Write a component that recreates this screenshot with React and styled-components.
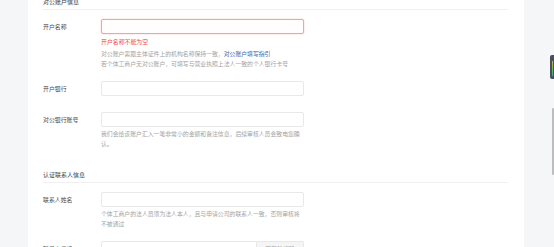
import React from 'react';
import styled, { createGlobalStyle } from 'styled-components';

const Global = createGlobalStyle`
  html, body { margin: 0; padding: 0; overflow: hidden; background: #f5f6f8; }
  body { font-family: "Noto Sans CJK SC", "Noto Sans", sans-serif; }
  #root { height: 247px; }
`;

const Page = styled.div`
  position: relative;
  display: flex;
  height: 247px;
  overflow: hidden;
  background: #f5f6f8;
`;

const Gutter = styled.div`
  flex: none;
  width: ${(p) => p.$w}px;
`;

const Card = styled.main`
  flex: none;
  width: 496px;
  box-sizing: border-box;
  padding: 0 16px 0 15px;
  background: #ffffff;
  overflow: hidden;
`;

const Content = styled.div`
  margin-top: -3px;
`;

const SectionTitle = styled.div`
  margin-top: ${(p) => p.$mt || 0}px;
  margin-bottom: 9px;
  padding-bottom: 2px;
  border-bottom: 1px solid #f0f0f2;
  font-size: 6px;
  line-height: 10px;
  color: #3a3a3a;
`;

const FormItem = styled.div`
  display: flex;
  align-items: flex-start;
  margin-bottom: ${(p) => p.$mb || 0}px;
`;

const Label = styled.label`
  flex: none;
  width: 58px;
  height: 15px;
  line-height: 15px;
  font-size: 5.9px;
  color: #4a4a4a;
`;

const Control = styled.div`
  flex: none;
  width: 203px;
  display: flex;
  flex-direction: column;
`;

const Input = styled.div`
  box-sizing: border-box;
  height: 15px;
  flex: ${(p) => (p.$joined ? '1 1 auto' : 'none')};
  border: 1px solid #e8e8ea;
  border-radius: ${(p) => (p.$joined ? '2px 0 0 2px' : '2px')};
  background: #fff;
`;

const ErrorInput = styled(Input)`
  border: 1px solid #ff9e9e;
  box-shadow: 0 0 0 0.5px rgba(255, 150, 150, 0.3);
  background: #fffdfd;
`;

const InputGroup = styled.div`
  display: flex;
  height: 15px;
`;

const Addon = styled.div`
  box-sizing: border-box;
  flex: none;
  width: 47px;
  height: 15px;
  border: 1px solid #e8e8ea;
  border-left: none;
  border-radius: 0 2px 2px 0;
  background: #f5f5f6;
  color: #aaa;
  font-size: 5.9px;
  line-height: 13px;
  text-align: center;
`;

const ErrorText = styled.div`
  margin-top: 3px;
  font-size: 5.9px;
  line-height: 10px;
  color: #f5454a;
`;

const Help = styled.div`
  margin-top: 2px;
  font-size: 5.85px;
  line-height: 10px;
  color: #a3a3a3;
`;

const Link = styled.a`
  color: #3e5fae;
  text-decoration: none;
`;

const SideBar = styled.div`
  flex: 1;
  position: relative;
`;

const FloatTab = styled.div`
  position: absolute;
  right: 0;
  top: 55px;
  width: 4px;
  height: 24px;
  background: #4a4f5c;
  border-radius: 2px 0 0 2px;
`;

const TabBar = styled.div`
  position: absolute;
  left: 1.5px;
  top: 6px;
  width: 1.5px;
  height: 15px;
  background: linear-gradient(#d3b444, #2fae8c);
`;

const ScrollThumb = styled.div`
  position: absolute;
  right: 0;
  top: 108px;
  width: 2.5px;
  height: 67px;
  background: #bdbdc0;
  border-radius: 1px;
`;

export default function App() {
  return (
    <>
      <Global />
      <Page>
        <Gutter $w={28} />
        <Card>
          <Content>
            <SectionTitle>对公账户信息</SectionTitle>

            <FormItem $mb={12}>
              <Label>开户名称</Label>
              <Control>
                <ErrorInput />
                <ErrorText>开户名称不能为空</ErrorText>
                <Help>
                  对公账户需跟主体证件上的机构名称保持一致，<Link>对公账户填写指引</Link>
                  <br />
                  若个体工商户无对公账户，可填写与营业执照上法人一致的个人银行卡号
                </Help>
              </Control>
            </FormItem>

            <FormItem $mb={16}>
              <Label>开户银行</Label>
              <Control>
                <Input />
              </Control>
            </FormItem>

            <FormItem>
              <Label>对公银行账号</Label>
              <Control>
                <Input />
                <Help>我们会给该账户汇入一笔非常小的金额和备注信息，后续审核人员会致电您确认。</Help>
              </Control>
            </FormItem>

            <SectionTitle $mt={21}>认证联系人信息</SectionTitle>

            <FormItem $mb={12}>
              <Label>联系人姓名</Label>
              <Control>
                <Input />
                <Help>个体工商户的法人员须为法人本人，且与申请公司的联系人一致，否则审核将不被通过</Help>
              </Control>
            </FormItem>

            <FormItem>
              <Label>联系人手机</Label>
              <Control>
                <InputGroup>
                  <Input $joined />
                  <Addon>获取验证码</Addon>
                </InputGroup>
              </Control>
            </FormItem>
          </Content>
        </Card>
        <SideBar>
          <FloatTab>
            <TabBar />
          </FloatTab>
          <ScrollThumb />
        </SideBar>
      </Page>
    </>
  );
}
